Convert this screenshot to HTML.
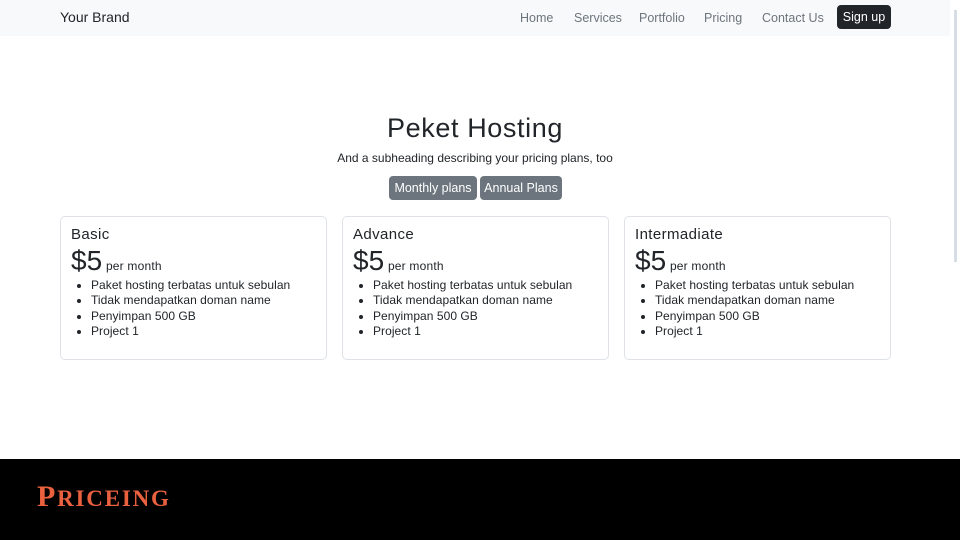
<!DOCTYPE html>
<html><head><meta charset="utf-8"><style>
*{margin:0;padding:0;box-sizing:border-box}
body{width:960px;height:540px;overflow:hidden;background:#fff;font-family:"Liberation Sans",sans-serif;color:#212529;position:relative}
.a{position:absolute;white-space:nowrap}
.nav{position:absolute;left:0;top:0;width:950px;height:36px;background:#f8f9fa}
.nl{top:11px;font-size:12.5px;color:#6c757d}
.btn{position:absolute;background:#6c757d;color:#fff;border-radius:4px;font-size:12.5px;text-align:center;line-height:24px;height:24px;top:176px}
.card{position:absolute;top:216px;width:267px;height:144px;border:1px solid #dee2e6;border-radius:5px}
.card h3{position:absolute;left:10px;top:9px;font-weight:normal;font-size:15px;letter-spacing:0.4px}
.card .p{position:absolute;left:10px;top:28px;font-size:28px}
.card .p span{font-size:12px;margin-left:-4px;letter-spacing:0.2px}
.card ul{position:absolute;left:30px;top:61px;font-size:12px;line-height:15.4px;letter-spacing:0.05px}
.foot{position:absolute;left:0;top:459px;width:960px;height:81px;background:#000}
</style></head><body>
<div class="nav"></div>
<div class="a" style="left:60px;top:9px;font-size:14px;color:#212529">Your Brand</div>
<div class="a nl" style="left:520px">Home</div>
<div class="a nl" style="left:574px">Services</div>
<div class="a nl" style="left:639px">Portfolio</div>
<div class="a nl" style="left:704px">Pricing</div>
<div class="a nl" style="left:762px">Contact Us</div>
<div class="a" style="left:837px;top:5px;width:54px;height:24px;background:#212529;color:#fff;border-radius:4px;font-size:12.5px;text-align:center;line-height:24px">Sign up</div>
<div class="a" style="left:954px;top:10px;width:3px;height:252px;background:#d6dde5"></div>
<div class="a" style="left:0;width:950px;top:113px;text-align:center;font-size:27px;letter-spacing:0.6px">Peket Hosting</div>
<div class="a" style="left:0;width:950px;top:151px;text-align:center;font-size:12px">And a subheading describing your pricing plans, too</div>
<div class="btn" style="left:389px;width:88px">Monthly plans</div>
<div class="btn" style="left:480px;width:82px">Annual Plans</div>
<div class="card" style="left:60px"><h3>Basic</h3><div class="p">$5 <span>per month</span></div><ul><li>Paket hosting terbatas untuk sebulan</li><li>Tidak mendapatkan doman name</li><li>Penyimpan 500 GB</li><li>Project 1</li></ul></div>
<div class="card" style="left:342px"><h3>Advance</h3><div class="p">$5 <span>per month</span></div><ul><li>Paket hosting terbatas untuk sebulan</li><li>Tidak mendapatkan doman name</li><li>Penyimpan 500 GB</li><li>Project 1</li></ul></div>
<div class="card" style="left:624px"><h3>Intermadiate</h3><div class="p">$5 <span>per month</span></div><ul><li>Paket hosting terbatas untuk sebulan</li><li>Tidak mendapatkan doman name</li><li>Penyimpan 500 GB</li><li>Project 1</li></ul></div>
<div class="foot"></div>
<div class="a" style="left:37px;top:482px;font-family:'Liberation Serif',serif;font-weight:bold;color:#e9613f;letter-spacing:1.8px;line-height:30px"><span style="font-size:30px">P</span><span style="font-size:23px">RICEING</span></div>
</body></html>
